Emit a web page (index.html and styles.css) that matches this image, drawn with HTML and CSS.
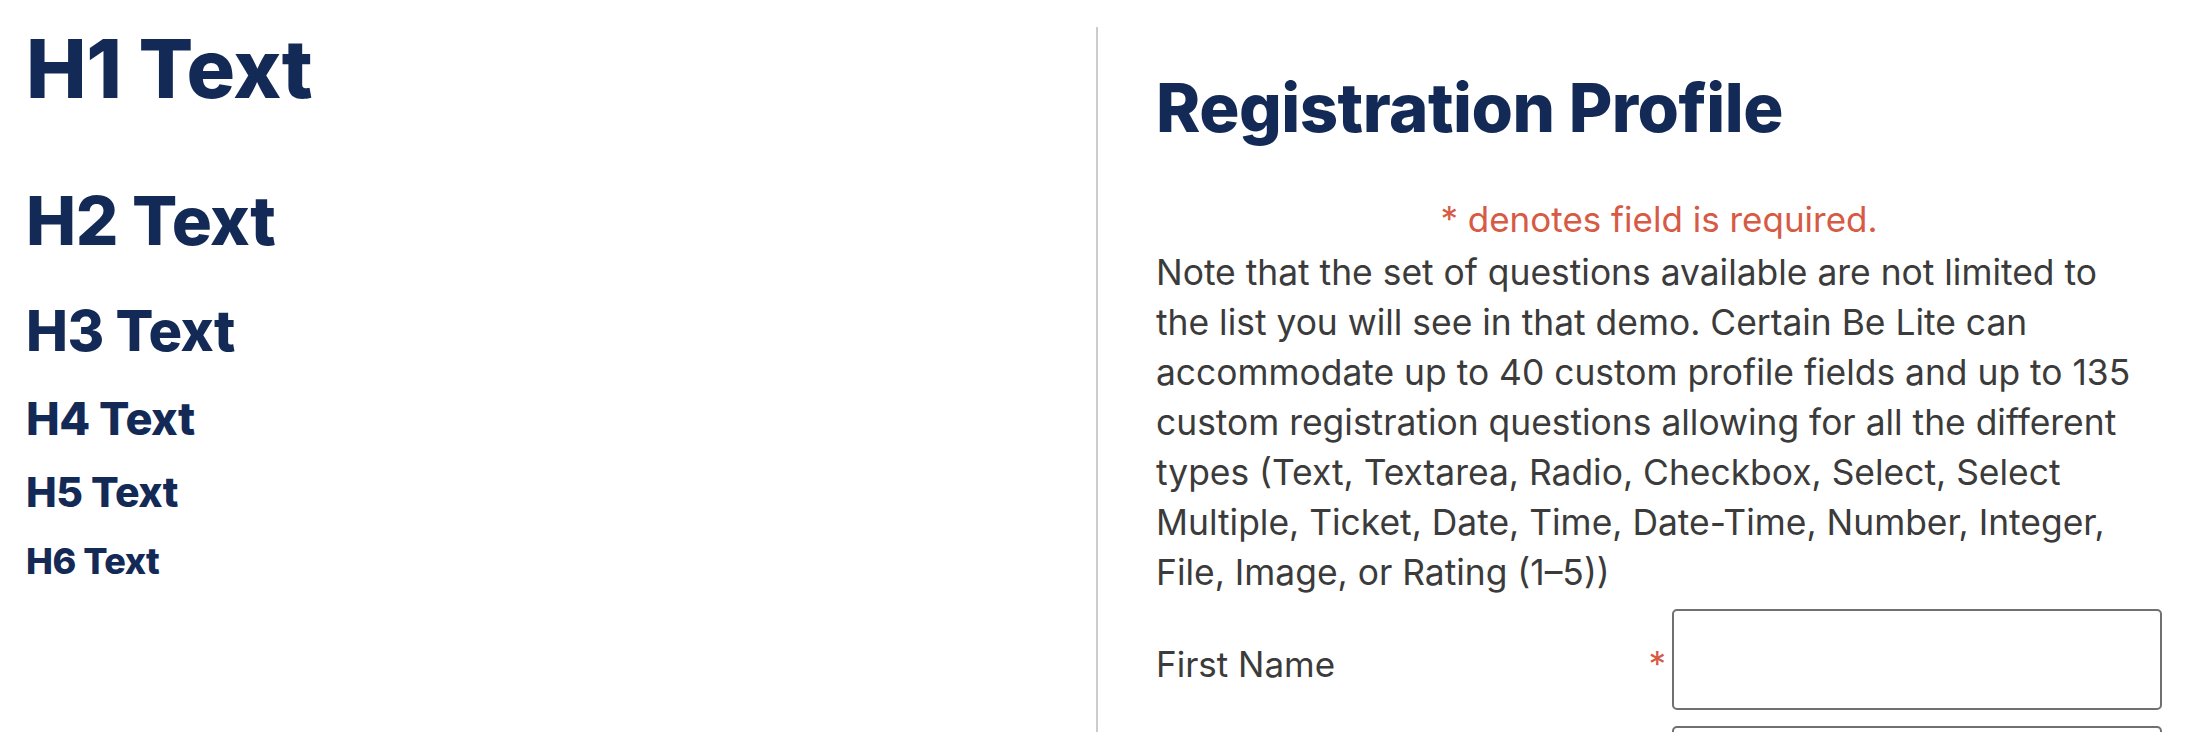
FILE: index.html
```html
<!DOCTYPE html>
<html lang="en">
<head>
  <meta charset="UTF-8">
  <title>Typography and Registration Profile</title>
  <link rel="stylesheet" href="styles.css">
</head>
<body>

  <div class="page">
    <div class="samples">
      <h1>H1 Text</h1>
      <h2>H2 Text</h2>
      <h3>H3 Text</h3>
      <h4>H4 Text</h4>
      <h5>H5 Text</h5>
      <h6>H6 Text</h6>
    </div>

    <div class="profile">
      <h2 class="profileTitle">Registration Profile</h2>
      <p class="requiredNote">* denotes field is required.</p>
      <p class="intro">Note that the set of questions available are not limited to the list you will see in that demo. Certain Be Lite can accommodate up to 40 custom profile fields and up to 135 custom registration questions allowing for all the different types (Text, Textarea, Radio, Checkbox, Select, Select Multiple, Ticket, Date, Time, Date-Time, Number, Integer, File, Image, or Rating (1–5))</p>

      <div class="field">
        <label for="firstName">First Name <span class="req">*</span></label>
        <input type="text" id="firstName">
      </div>
      <div class="field">
        <label for="lastName"></label>
        <input type="text" id="lastName" aria-label="Last Name">
      </div>
    </div>
  </div>

</body>
</html>
```

FILE: styles.css
```css
* { box-sizing: border-box; }
body {
  margin: 0;
  padding: 0;
  font-family: Inter, "Noto Sans", sans-serif;
  background: #fff;
  color: #3b3b3b;
  overflow: hidden;
}
.page {
  display: grid;
  grid-template-columns: 1fr 1fr;
  height: 732px;
}
.samples {
  padding: 0 26px;
}
h1, h2, h3, h4, h5, h6 {
  color: #142a56;
  font-weight: 800;
  line-height: 1.2;
  margin: 0;
  letter-spacing: -0.5px;
}
h1 { font-size: 81px; margin-top: 21px; }
h2 { font-size: 67px; margin-top: 63px; }
h3 { font-size: 56px; margin-top: 36px; }
h4 { font-size: 45px; margin-top: 27px; }
h5 { font-size: 41px; margin-top: 22px; }
h6 { font-size: 36px; margin-top: 23px; }

.profile {
  margin-top: 27px;
  border-left: 2px solid #cccccc;
  padding: 0 30px 0 58px;
}
.profile .profileTitle {
  margin-top: 41px;
}
.requiredNote {
  margin: 46px 0 0;
  text-align: center;
  color: #d65a44;
  font-size: 35px;
  line-height: 50px;
}
.intro {
  margin: 4px 0 0;
  padding-right: 30px;
  font-size: 35.4px;
  line-height: 50px;
}
.field {
  display: grid;
  grid-template-columns: 1fr 490px;
  margin-top: 11px;
}
.field + .field {
  margin-top: 16px;
}
.field label {
  display: flex;
  justify-content: space-between;
  align-items: center;
  font-size: 35px;
  padding: 8px 6px 0 0;
}
.req {
  color: #d65a44;
}
.field input {
  height: 101px;
  border: 2px solid #707070;
  border-radius: 5px;
  font: inherit;
  padding: 0 12px;
}
```
